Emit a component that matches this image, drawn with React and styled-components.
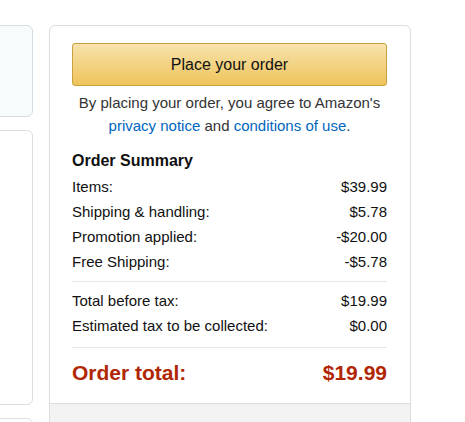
import React from 'react';
import styled, { createGlobalStyle } from 'styled-components';

const GlobalStyle = createGlobalStyle`
  html, body {
    margin: 0;
    padding: 0;
    background: #fff;
  }
  body {
    font-family: "Liberation Sans", Arial, sans-serif;
    color: #111;
    overflow: hidden;
  }
`;

const Page = styled.div`
  box-sizing: border-box;
  display: flex;
  align-items: flex-start;
  gap: 16px;
  padding-top: 25px;
  width: 465px;
  height: 422px;
  overflow: hidden;
`;

const LeftColumn = styled.div`
  flex: 0 0 300px;
  margin-left: -267px;
  display: flex;
  flex-direction: column;
  gap: 13px;
`;

const Card = styled.div`
  height: ${(p) => p.$height}px;
  border: 1px solid ${(p) => (p.$tinted ? '#d3dde2' : '#dddddd')};
  background: ${(p) => (p.$tinted ? '#f8fbfc' : '#ffffff')};
  border-radius: 6px;
`;

const Panel = styled.div`
  flex: 0 0 362px;
  box-sizing: border-box;
  border: 1px solid #dddddd;
  border-radius: 6px;
  overflow: hidden;
`;

const PanelBody = styled.div`
  padding: 17px 23px 15px 22px;
`;

const PanelFooter = styled.div`
  height: 40px;
  background: #f3f3f3;
  border-top: 1px solid #dddddd;
`;

const PlaceButton = styled.button`
  display: block;
  width: 100%;
  height: 43px;
  border: 1px solid #c9a23f;
  border-radius: 3px;
  background: linear-gradient(to bottom, #f8e3ad, #eec35a);
  font-family: "Liberation Sans", Arial, sans-serif;
  font-size: 16px;
  color: #111;
  cursor: pointer;
  padding: 0;
`;

const Agreement = styled.p`
  margin: 5px 0 0;
  text-align: center;
  font-size: 15px;
  line-height: 23px;
  color: #333;
`;

const Link = styled.a`
  color: #0066c0;
  text-decoration: none;
`;

const SummaryTitle = styled.h3`
  margin: 13px 0 2px;
  font-size: 16px;
  line-height: 22px;
  font-weight: bold;
  color: #111;
`;

const Row = styled.div`
  display: flex;
  justify-content: space-between;
  font-size: 15px;
  line-height: 25px;
  color: #111;
`;

const Divider = styled.hr`
  border: 0;
  border-top: 1px solid #e7e7e7;
  margin: ${(p) => p.$margin || '7px 0 6px'};
`;

const TotalRow = styled.div`
  display: flex;
  justify-content: space-between;
  font-size: 21px;
  line-height: 30px;
  font-weight: bold;
  color: #b12704;
`;

const items = [
  ['Items:', '$39.99'],
  ['Shipping & handling:', '$5.78'],
  ['Promotion applied:', '-$20.00'],
  ['Free Shipping:', '-$5.78'],
];

const taxes = [
  ['Total before tax:', '$19.99'],
  ['Estimated tax to be collected:', '$0.00'],
];

export default function App() {
  return (
    <>
      <GlobalStyle />
      <Page>
        <LeftColumn>
          <Card $tinted $height={90} />
          <Card $height={273} />
          <Card $height={60} />
        </LeftColumn>

        <Panel>
          <PanelBody>
            <PlaceButton>Place your order</PlaceButton>
            <Agreement>
              By placing your order, you agree to Amazon's{' '}
              <Link href="#">privacy notice</Link> and{' '}
              <Link href="#">conditions of use</Link>.
            </Agreement>

            <SummaryTitle>Order Summary</SummaryTitle>
            {items.map(([label, value]) => (
              <Row key={label}>
                <span>{label}</span>
                <span>{value}</span>
              </Row>
            ))}

            <Divider />
            {taxes.map(([label, value]) => (
              <Row key={label}>
                <span>{label}</span>
                <span>{value}</span>
              </Row>
            ))}

            <Divider $margin="9px 0 10px" />
            <TotalRow>
              <span>Order total:</span>
              <span>$19.99</span>
            </TotalRow>
          </PanelBody>
          <PanelFooter />
        </Panel>
      </Page>
    </>
  );
}
